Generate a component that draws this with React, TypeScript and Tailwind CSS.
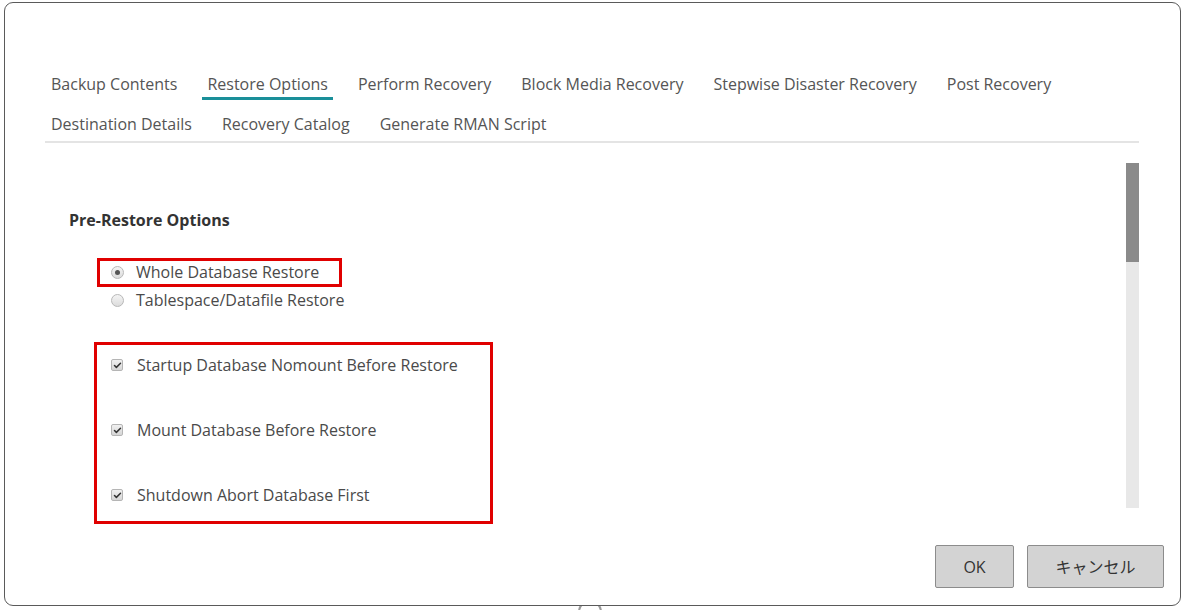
import { Check } from 'lucide-react'

const tabsRow1 = [
  'Backup Contents',
  'Restore Options',
  'Perform Recovery',
  'Block Media Recovery',
  'Stepwise Disaster Recovery',
  'Post Recovery',
]
const tabsRow2 = ['Destination Details', 'Recovery Catalog', 'Generate RMAN Script']

function Tab({ label, active }: { label: string; active?: boolean }) {
  return (
    <div
      className={
        active
          ? 'px-[5px] pb-[2px] leading-[22px] border-b-[3px] border-[#1a8f99] text-[#555]'
          : 'px-[5px] pb-[2px] leading-[22px] border-b-[3px] border-transparent text-[#555]'
      }
    >
      {label}
    </div>
  )
}

function Radio({ checked }: { checked?: boolean }) {
  return (
    <span className="w-[13px] h-[13px] rounded-full border border-[#b8b8b8] bg-gradient-to-b from-[#f4f4f4] to-[#dcdcdc] flex items-center justify-center">
      {checked && <span className="w-[5px] h-[5px] rounded-full bg-[#555]" />}
    </span>
  )
}

function CheckBox() {
  return (
    <span className="w-[12px] h-[12px] rounded-[2px] border border-[#b5b5b5] bg-gradient-to-b from-[#f0f0f0] to-[#d6d6d6] flex items-center justify-center">
      <Check size={9} strokeWidth={4} className="text-[#333]" />
    </span>
  )
}

export default function App() {
  return (
    <div
      className="w-[1183px] h-[610px] bg-white pl-[4px] pt-[2px] relative overflow-hidden"
      style={{ fontFamily: '"Open Sans", "Noto Sans CJK JP", sans-serif' }}
    >
      <div className="absolute left-[578px] top-[600px] w-[24px] h-[24px] rounded-full border-2 border-[#9a9a9a]" />
      <div className="relative w-[1177px] h-[604px] border border-[#5a5a5a] rounded-[9px] bg-white pt-[70px] pl-[40px] pr-[41px]">
        <div className="flex flex-col gap-[13px] border-b-2 border-[#e4e4e4] pl-px pb-px text-[16px]">
          <div className="flex gap-[20px]">
            {tabsRow1.map((t) => (
              <Tab key={t} label={t} active={t === 'Restore Options'} />
            ))}
          </div>
          <div className="flex gap-[20px]">
            {tabsRow2.map((t) => (
              <Tab key={t} label={t} />
            ))}
          </div>
        </div>

        <div className="flex mt-[20px] h-[345px]">
          <div className="flex-1 pl-[24px] pt-[47px] text-[16px] leading-[22px] text-[#4a4a4a]">
            <div className="font-bold text-[#333] leading-[20px]">Pre-Restore Options</div>
            <div className="mt-[28px] pl-[42px] flex flex-col">
              <label className="flex items-center gap-[12px] h-[28px]">
                <Radio checked />
                <span>Whole Database Restore</span>
              </label>
              <label className="flex items-center gap-[12px] h-[28px]">
                <Radio />
                <span>Tablespace/Datafile Restore</span>
              </label>
            </div>
            <div className="mt-[40px] pl-[42px] flex flex-col gap-[43px]">
              {[
                'Startup Database Nomount Before Restore',
                'Mount Database Before Restore',
                'Shutdown Abort Database First',
              ].map((t) => (
                <label key={t} className="flex items-center gap-[14px] h-[22px]">
                  <CheckBox />
                  <span>{t}</span>
                </label>
              ))}
            </div>
          </div>
          <div className="w-[13px] h-full bg-[#e8e8e8] flex flex-col">
            <div className="h-[99px] bg-[#8a8a8a]" />
          </div>
        </div>

        <div className="absolute right-[16px] bottom-[17px] flex gap-[13px] text-[16px] text-[#333]">
          <button className="w-[79px] h-[43px] bg-[#d3d3d3] border border-[#8c8c8c] rounded-[2px]">OK</button>
          <button className="w-[137px] h-[43px] bg-[#d3d3d3] border border-[#8c8c8c] rounded-[2px]">キャンセル</button>
        </div>

        <div className="absolute left-[92px] top-[255px] w-[245px] h-[29px] border-[3px] border-[#e00000]" />
        <div className="absolute left-[89px] top-[339px] w-[399px] h-[182px] border-[3px] border-[#e00000]" />
      </div>
    </div>
  )
}
